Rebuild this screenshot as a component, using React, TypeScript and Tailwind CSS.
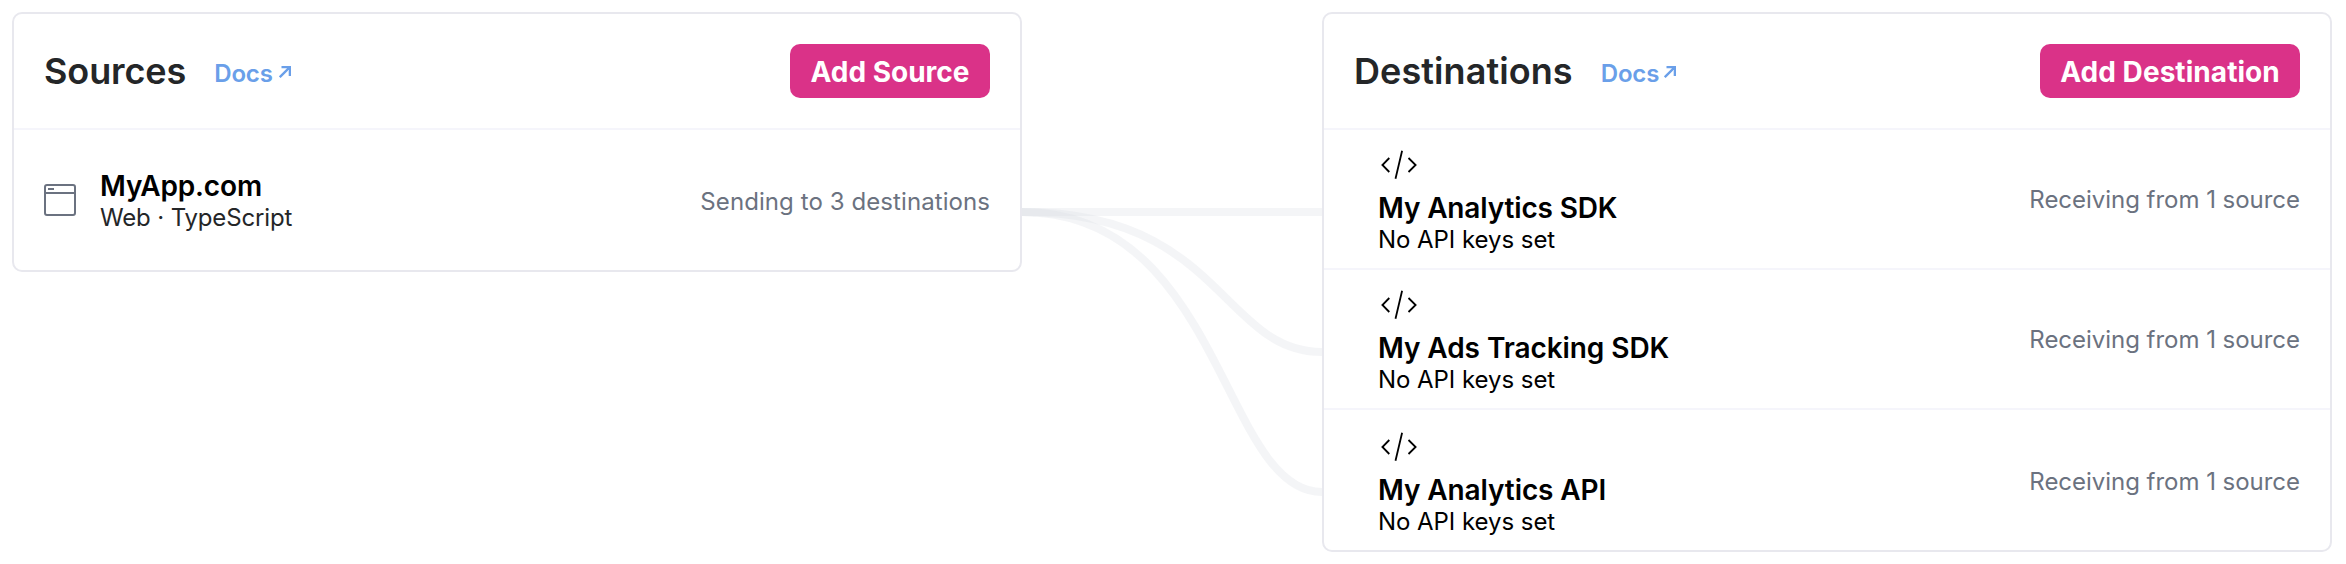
import React from "react";

function DocsLink({ className, gap }: { className: string; gap: string }) {
  return (
    <a className={`flex items-start pt-[6px] text-[24px] leading-[28px] font-semibold tracking-[-0.15px] text-[#6a9fe9] ${className}`}>
      Docs
      <svg className={`mt-[6px] h-3 w-3 ${gap}`} viewBox="0 0 12 12" fill="none" stroke="currentColor" strokeWidth="2.3">
        <path d="M2.5 1.15H10.85V10M10.85 1.15L0.8 11.2" />
      </svg>
    </a>
  );
}

function BrowserIcon() {
  return (
    <svg className="h-8 w-8 shrink-0 text-[#6b7280]" viewBox="0 0 32 32" fill="none" stroke="currentColor" strokeWidth="2">
      <rect x="1" y="1" width="30" height="30" rx="2" />
      <path d="M1 9H31M4 5H10" />
    </svg>
  );
}

function CodeIcon() {
  return (
    <svg className="h-[34px] w-[42px] text-black" viewBox="0 0 42 34" fill="none" stroke="currentColor" strokeWidth="1.8">
      <path d="M11.3 10L4.4 17L11.3 24M30.5 10L37.6 17L30.5 24M24.1 2.7L17.5 30.8" />
    </svg>
  );
}

function AddButton({ label, className }: { label: string; className: string }) {
  return (
    <button
      className={`flex h-[54px] items-center justify-center rounded-[10px] bg-[#da3288] pt-px text-[28px] leading-[34px] font-bold whitespace-nowrap text-white ${className}`}
    >
      {label}
    </button>
  );
}

const destinations = [
  { name: "My Analytics SDK", row: "h-[140px] border-b-2 pt-[18px]", tracking: "tracking-[-0.15px]" },
  { name: "My Ads Tracking SDK", row: "h-[140px] border-b-2 pt-[18px]", tracking: "tracking-[-0.08px]" },
  { name: "My Analytics API", row: "h-[140px] pt-5", tracking: "tracking-[-0.1px]" },
];

export default function App() {
  return (
    <div className="flex h-[564px] w-[2346px] items-start bg-white p-3 font-['Inter',sans-serif]">
      <section className="h-[260px] w-[1010px] shrink-0 rounded-[10px] border-2 border-[#e8e8ee]">
        <header className="flex h-[116px] items-center border-b-2 border-[#f5f5fb] px-[30px]">
          <h2 className="text-[36px] leading-[44px] font-semibold tracking-[-0.1px] text-[#242628]">Sources</h2>
          <DocsLink className="ml-[28px]" gap="ml-[6px]" />
          <AddButton label="Add Source" className="ml-auto w-[200px]" />
        </header>
        <div className="flex h-[140px] items-center px-[30px]">
          <BrowserIcon />
          <div className="ml-6 pt-px">
            <div className="text-[28px] leading-[34px] font-semibold tracking-[-0.17px] text-black">MyApp.com</div>
            <div className="mt-px text-[24px] leading-[28px] tracking-[-0.15px] text-[#242628]">Web · TypeScript</div>
          </div>
          <div className="ml-auto pt-[3px] text-[24px] leading-[28px] tracking-[0.08px] text-[#6b7280]">
            Sending to 3 destinations
          </div>
        </div>
      </section>

      <svg className="h-[540px] w-[300px] shrink-0" viewBox="0 0 300 540" fill="none" stroke="rgba(220,223,229,0.3)" strokeWidth="8">
        <path d="M0 200H300" />
        <path d="M0 200C200 200 200 340 300 340" />
        <path d="M0 200C200 200 200 480 300 480" />
      </svg>

      <section className="h-[540px] w-[1010px] shrink-0 rounded-[10px] border-2 border-[#e8e8ee]">
        <header className="flex h-[116px] items-center border-b-2 border-[#f5f5fb] px-[30px]">
          <h2 className="text-[36px] leading-[44px] font-semibold tracking-[0.08px] text-[#242628]">Destinations</h2>
          <DocsLink className="ml-[28px]" gap="ml-[5px]" />
          <AddButton label="Add Destination" className="ml-auto w-[260px] tracking-[0.06px]" />
        </header>
        {destinations.map((d) => (
          <div key={d.name} className={`flex items-start justify-between border-[#f5f5fb] pr-[30px] pl-[54px] ${d.row}`}>
            <div>
              <CodeIcon />
              <div className={`mt-[9px] text-[28px] leading-[34px] font-semibold text-black ${d.tracking}`}>{d.name}</div>
              <div className="mt-px text-[24px] leading-[28px] tracking-[-0.05px] text-black">No API keys set</div>
            </div>
            <div className="pt-[38px] text-[24px] leading-[28px] tracking-[-0.03px] text-[#6b7280]">Receiving from 1 source</div>
          </div>
        ))}
      </section>
    </div>
  );
}
